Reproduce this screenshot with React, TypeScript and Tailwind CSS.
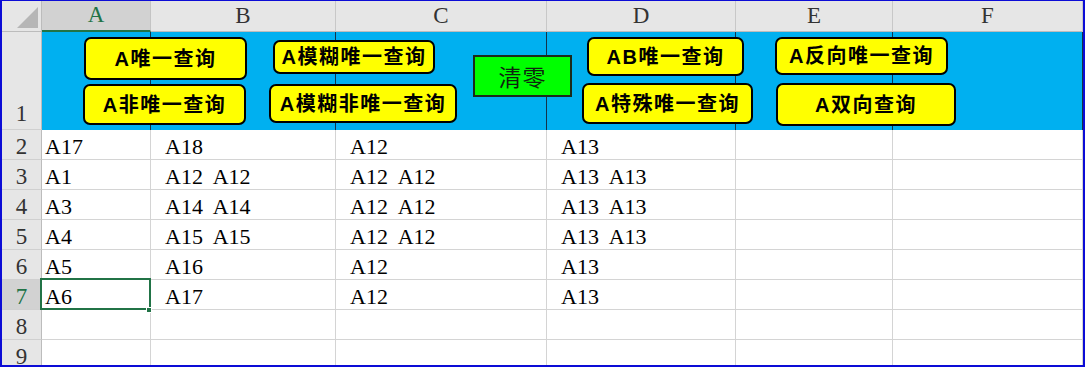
const cols = ["A", "B", "C", "D", "E", "F"];

const data: string[][] = [
  ["A17", "A18", "A12", "A13"],
  ["A1", "A12  A12", "A12  A12", "A13  A13"],
  ["A3", "A14  A14", "A12  A12", "A13  A13"],
  ["A4", "A15  A15", "A12  A12", "A13  A13"],
  ["A5", "A16", "A12", "A13"],
  ["A6", "A17", "A12", "A13"],
  [],
  [],
];

const serif = "font-['Liberation_Serif','Noto_Sans_CJK_SC',serif]";
const btnFont = "font-['Liberation_Sans','Noto_Sans_CJK_SC',sans-serif]";

// floating shapes over row 1, coordinates taken from the sheet
const buttons = [
  { label: "A唯一查询", cls: "left-[82px] top-[36px] w-[163px] h-[43px]" },
  { label: "A非唯一查询", cls: "left-[81px] top-[83px] w-[163px] h-[41px]" },
  { label: "A模糊唯一查询", cls: "left-[271px] top-[39px] w-[162px] h-[34px]" },
  { label: "A模糊非唯一查询", cls: "left-[267px] top-[83px] w-[188px] h-[39px]" },
  { label: "AB唯一查询", cls: "left-[585px] top-[36px] w-[157px] h-[39px]" },
  { label: "A特殊唯一查询", cls: "left-[580px] top-[82px] w-[171px] h-[41px]" },
  { label: "A反向唯一查询", cls: "left-[773px] top-[36px] w-[173px] h-[38px]" },
  { label: "A双向查询", cls: "left-[774px] top-[82px] w-[180px] h-[43px]" },
];

function RowHead({ n, selected }: { n: number; selected?: boolean }) {
  return (
    <div
      className={`flex items-end justify-center border-r border-b border-r-[#bcbcbc] border-b-[#d0d0d0] text-[23px] leading-[24px] ${serif} ${
        selected ? "bg-[#d2d2d2] text-[#217346]" : "bg-[#e6e6e6] text-[#333]"
      }`}
    >
      {n}
    </div>
  );
}

export default function App() {
  return (
    <div className="w-[1085px] h-[367px] overflow-hidden bg-white border-l-2 border-r-2 border-t border-b-2 border-[#0c0cd6]">
      <div className="relative w-[1081px] h-[364px] overflow-hidden">
        <div className="grid grid-cols-[40px_109px_185px_211px_189px_157px_190px] grid-rows-[31px_98px_repeat(8,30px)]">
          {/* corner */}
          <div className="flex items-start justify-end bg-[#e6e6e6] border-r border-b border-[#bcbcbc] pt-[6px] pr-[3px]">
            <svg width="21" height="21" viewBox="0 0 21 21">
              <polygon points="0,21 21,21 21,0" fill="#b6b6b6" />
            </svg>
          </div>
          {cols.map((c, i) => (
            <div
              key={c}
              className={`flex items-center justify-center border-r border-b text-[23px] ${serif} ${
                i === 0
                  ? "bg-[#d2d2d2] text-[#217346] border-r-[#c4c4c4] border-b-2 border-b-[#217346]"
                  : "bg-[#e6e6e6] text-[#333] border-r-[#c8c8c8] border-b-[#bcbcbc]"
              }`}
            >
              {c}
            </div>
          ))}

          {/* row 1 */}
          <div className={`flex items-end justify-center pb-[3px] bg-[#e6e6e6] border-r border-b border-r-[#bcbcbc] border-b-[#d0d0d0] text-[23px] leading-[24px] text-[#333] ${serif}`}>
            1
          </div>
          {cols.map((c) => (
            <div key={c} className="bg-[#00b0f0] border-r border-r-[#12334a]" />
          ))}

          {/* rows 2-9 */}
          {data.map((row, r) => (
            <div key={r} className="contents">
              <RowHead n={r + 2} selected={r + 2 === 7} />
              {cols.map((c, i) => (
                <div
                  key={c}
                  className={`flex items-end whitespace-pre border-r border-b border-[#d4d4d4] text-[22px] leading-[24px] text-black ${serif} ${
                    i === 0 ? "pl-[3px]" : "pl-[14px]"
                  }`}
                >
                  {row[i] ?? ""}
                </div>
              ))}
            </div>
          ))}
        </div>

        {/* selected cell A7 */}
        <div className="absolute left-[38px] top-[277px] w-[111px] h-[32px] border-2 border-[#217346]" />
        <div className="absolute left-[144px] top-[306px] w-[6px] h-[6px] bg-[#217346] border border-white" />

        {buttons.map((b) => (
          <div
            key={b.label}
            className={`absolute ${b.cls} flex items-center justify-center rounded-[7px] border-2 border-black bg-[#ffff00] text-[20px] font-bold tracking-[1.5px] text-black ${btnFont}`}
          >
            {b.label}
          </div>
        ))}

        <div className="absolute left-[471px] top-[54px] w-[99px] h-[42px] flex items-center justify-center border-2 border-[#1c2a1c] bg-[#00ff00] text-[23px] tracking-[1px] text-[#0f240f] font-['Noto_Sans_CJK_SC',serif]">
          清零
        </div>
      </div>
    </div>
  );
}
